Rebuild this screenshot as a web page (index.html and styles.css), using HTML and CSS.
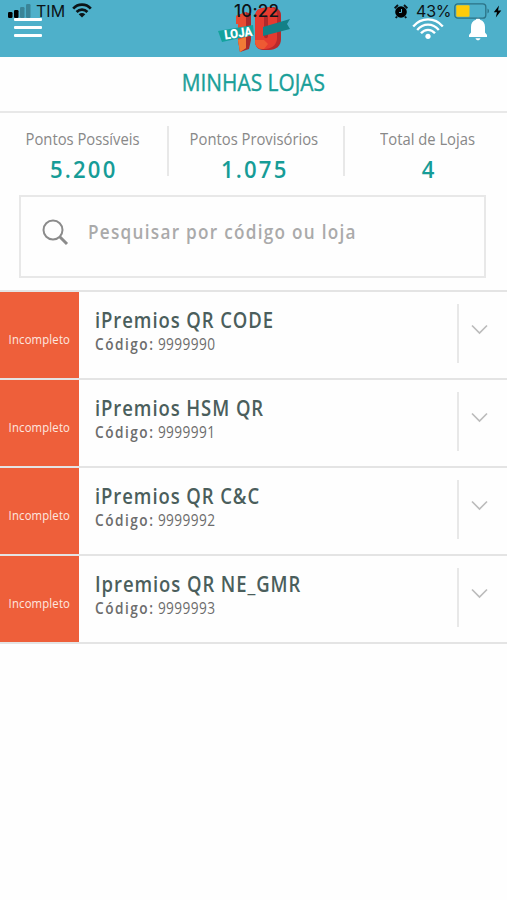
FILE: index.html
```html
<!DOCTYPE html>
<html lang="pt-BR">
  <head>
    <meta charset="UTF-8" />
    <meta name="viewport" content="width=device-width, initial-scale=1.0" />
    <title>Minhas Lojas</title>
    <link rel="stylesheet" href="styles.css">
  </head>
  <body>
    <header class="app-bar">
      <div class="status-bar">
        <div class="status-left">
          <svg class="signal" width="23" height="14" viewBox="0 0 23 14">
            <rect x="0" y="8" width="4.5" height="6" rx="1.2" />
            <rect x="6" y="6" width="4.5" height="8" rx="1.2" />
            <rect x="12" y="3" width="4.5" height="11" rx="1.2" opacity="0.25" />
            <rect x="18" y="0" width="4.5" height="14" rx="1.2" opacity="0.25" />
          </svg>
          <span class="carrier">TIM</span>
          <svg width="20" height="15" viewBox="0 0 20 15" fill="none" stroke="#0c1417" stroke-width="2.7">
            <path d="M1.2 5.6C6 .4 14 .4 18.8 5.6" />
            <path d="M4.6 9C7.6 5.8 12.4 5.8 15.4 9" />
            <path d="M10 14.5L6.7 11.3C8.6 9.5 11.4 9.5 13.3 11.3Z" fill="#0c1417" stroke="none" />
          </svg>
        </div>
        <span class="clock">10:22</span>
        <div class="status-right">
          <svg class="alarm" width="14" height="15" viewBox="0 0 14 15">
            <circle cx="7" cy="8" r="5.8" />
            <path d="M.6 4.2L4 1M13.4 4.2L10 1M3 12.5L1.8 14M11 12.5L12.2 14" stroke="#0c1417" stroke-width="2" />
            <path d="M7.5 5V8.5H5" fill="none" stroke="#4eb0ca" stroke-width="1" />
          </svg>
          <span class="percent">43%</span>
          <svg class="battery" width="36" height="16" viewBox="0 0 36 16">
            <rect x=".8" y=".8" width="31" height="14.4" rx="3" fill="none" stroke="#2b7286" stroke-width="1.3" />
            <rect x="2.3" y="2.3" width="13.2" height="11.4" rx="1" fill="#fecb0a" />
            <path d="M33.5 5.5C35.5 6.5 35.5 9.5 33.5 10.5Z" fill="#2b7286" />
          </svg>
          <svg width="9" height="13" viewBox="0 0 9 13">
            <path d="M6 .5L.8 7.3H4L2.8 12.6L8.3 5.4H5Z" />
          </svg>
        </div>
      </div>
      <button class="menu-btn" aria-label="Menu"><span></span><span></span><span></span></button>
      <svg class="logo" width="74" height="48" viewBox="0 0 74 48">
        <path d="M19 10L29 6L34 8V34L32 43L23 46L21 34V18H19Z" fill="#a92a2c" />
        <path d="M19 10L29 6V42L23 46L21 34V18H19Z" fill="#e84b31" />
        <path d="M21 34L29 31V42L23 46Z" fill="#f17b36" />
        <path d="M45 2L57 1C61 2 64 5 64 9V33C64 40 59 44 52 44H46C41 44 38 40 38 35V12C38 6 40 3 45 2Z" fill="#b82a2c" />
        <path d="M45 2L53 1C58 2 60 5 60 9V32C60 38 56 42 49 43H45C41 43 38 40 38 35V12C38 6 40 3 45 2Z" fill="#e53b30" />
        <path d="M47 12C47 8 51 8 51 12V30C51 33 47 33 47 30Z" fill="#b02a2c" />
        <path d="M38 34L47 34L51 38L47 43H45C41 43 38 40 38 35Z" fill="#ee5a33" />
        <path d="M46 21L73 13L70 18L73 23L46 30Z" fill="#138087" />
        <path d="M1 25L36 19L37 29L5 36Z" fill="#14a29e" />
        <text class="logo-text" x="8" y="33.5" transform="rotate(-8 8 33.5)" textLength="28" lengthAdjust="spacingAndGlyphs">LOJA</text>
      </svg>
      <div class="bar-icons">
        <svg width="32" height="22" viewBox="0 0 32 22" fill="none" stroke="#fff" stroke-width="2.3">
          <path d="M1.2 8.5C9.3-.9 22.7-.9 30.8 8.5" />
          <path d="M5.2 12C11.2 4.9 20.8 4.9 26.8 12" />
          <path d="M9 15.3C13 10.6 19 10.6 23 15.3" />
          <circle cx="16" cy="18.3" r="2.6" fill="#fff" stroke="none" />
        </svg>
        <svg class="bell" width="20" height="24" viewBox="0 0 20 24" fill="#fff">
          <path d="M10 .8C11.3 .8 12 1.5 12 2.8C15.5 3.8 17 6.5 17 10V15.5L19 18V20H1V18L3 15.5V10C3 6.5 4.5 3.8 8 2.8C8 1.5 8.7 .8 10 .8Z" />
          <path d="M7.5 21.2H12.5C12 22.8 11 23.2 10 23.2S8 22.8 7.5 21.2Z" />
        </svg>
      </div>
    </header>

    <h1 class="page-title"><span>MINHAS LOJAS</span></h1>

    <section class="stats">
      <div class="stat">
        <span class="stat-label">Pontos Possíveis</span>
        <span class="stat-value">5.200</span>
      </div>
      <div class="stat">
        <span class="stat-label">Pontos Provisórios</span>
        <span class="stat-value">1.075</span>
      </div>
      <div class="stat">
        <span class="stat-label">Total de Lojas</span>
        <span class="stat-value">4</span>
      </div>
    </section>

    <div class="search">
      <svg width="27" height="27" viewBox="0 0 27 27" fill="none" stroke="#8b8b8b">
        <circle cx="11" cy="11" r="9.5" stroke-width="2" />
        <path d="M17.5 17.5L25 25" stroke-width="3" />
      </svg>
      <span class="search-text">Pesquisar por código ou loja</span>
    </div>

    <ul class="stores">
      <li class="store">
        <div class="store-status"><span>Incompleto</span></div>
        <div class="store-info">
          <h2 class="store-name">iPremios QR CODE</h2>
          <p class="store-code"><b>Código:</b><span>9999990</span></p>
        </div>
        <div class="store-toggle">
          <svg width="17" height="11" viewBox="0 0 17 11"><path d="M1 1.5L8.5 9L16 1.5" /></svg>
        </div>
      </li>
      <li class="store">
        <div class="store-status"><span>Incompleto</span></div>
        <div class="store-info">
          <h2 class="store-name">iPremios HSM QR</h2>
          <p class="store-code"><b>Código:</b><span>9999991</span></p>
        </div>
        <div class="store-toggle">
          <svg width="17" height="11" viewBox="0 0 17 11"><path d="M1 1.5L8.5 9L16 1.5" /></svg>
        </div>
      </li>
      <li class="store">
        <div class="store-status"><span>Incompleto</span></div>
        <div class="store-info">
          <h2 class="store-name">iPremios QR C&amp;C</h2>
          <p class="store-code"><b>Código:</b><span>9999992</span></p>
        </div>
        <div class="store-toggle">
          <svg width="17" height="11" viewBox="0 0 17 11"><path d="M1 1.5L8.5 9L16 1.5" /></svg>
        </div>
      </li>
      <li class="store">
        <div class="store-status"><span>Incompleto</span></div>
        <div class="store-info">
          <h2 class="store-name">Ipremios QR NE_GMR</h2>
          <p class="store-code"><b>Código:</b><span>9999993</span></p>
        </div>
        <div class="store-toggle">
          <svg width="17" height="11" viewBox="0 0 17 11"><path d="M1 1.5L8.5 9L16 1.5" /></svg>
        </div>
      </li>
    </ul>
  </body>
</html>
```

FILE: styles.css
```css
* {
  box-sizing: border-box;
}
body {
  margin: 0;
  min-height: 900px;
  background: #fefefe;
  font-family: "Open Sans", "Noto Sans", sans-serif;
  color: #666;
}
svg {
  display: block;
}
.app-bar {
  position: relative;
  display: flex;
  justify-content: space-between;
  height: 57px;
  padding: 0 19px 0 14px;
  background: #4eb0ca;
}
/* phone status bar sits on top of the app bar */
.status-bar {
  position: absolute;
  z-index: 1;
  top: 0;
  left: 0;
  width: 100%;
  height: 22px;
  padding: 0 5px 0 8px;
  display: flex;
  align-items: center;
  justify-content: space-between;
  font-family: Inter, "Liberation Sans", sans-serif;
  font-size: 16px;
  line-height: 22px;
  color: #0c1417;
}
.status-left,
.status-right {
  display: flex;
  align-items: center;
}
.status-left {
  margin-top: -1px;
}
.signal {
  margin: 0 5px 0 0;
}
.carrier {
  width: 28px;
  margin-right: 8px;
}
.clock {
  position: absolute;
  top: 0;
  left: 234px;
  font-size: 17px;
  font-weight: 500;
  letter-spacing: 0.2px;
}
.percent {
  margin: 0 4px 0 8px;
  width: 34px;
  letter-spacing: -0.2px;
}
.battery {
  margin-right: 3px;
}
.menu-btn {
  display: flex;
  flex-direction: column;
  gap: 5px;
  width: 28px;
  margin-top: 18px;
  padding: 0;
  border: none;
  background: none;
}
.menu-btn span {
  height: 3px;
  width: 28px;
  border-radius: 1px;
  background: #fff;
}
.logo {
  margin: 6px 0 0 53px;
  width: 74px;
}
.logo-text {
  font-family: Roboto, sans-serif;
  font-size: 13px;
  font-weight: 900;
  fill: #fff;
}
.bar-icons {
  display: flex;
  gap: 24px;
  padding-top: 18px;
}
.bell {
  margin-top: -1px;
}
/* narrow the lettering */
.page-title span,
.stat-label,
.store-status span {
  display: inline-block;
  transform: scaleX(0.87);
}
.search-text,
.store-name,
.store-code {
  transform: scaleX(0.88);
  transform-origin: left;
}
.page-title {
  margin: 0;
  height: 56px;
  border-bottom: 2px solid #e8e8e8;
  text-align: center;
  font-size: 24px;
  font-weight: 500;
  line-height: 50px;
  color: #1a9f99;
}
.page-title span {
  -webkit-text-stroke: 0.4px;
}
.stats {
  display: grid;
  grid-template-columns: 168.5px 176px 1fr;
  height: 64px;
  margin-top: 13px;
}
.stat {
  display: flex;
  flex-direction: column;
  align-items: center;
  height: 50px;
  border-right: 2px solid #e8e8e8;
}
.stat:first-child {
  padding-right: 2px;
}
.stat:nth-child(2) {
  padding-right: 4px;
}
.stat:last-child {
  border-right: none;
  padding-left: 4px;
}
.stat-label {
  font-size: 17px;
  line-height: 25px;
  color: #888;
}
.stat-value {
  font-size: 24px;
  font-weight: 600;
  letter-spacing: 2.4px;
  margin-right: -2px;
  line-height: 35px;
  color: #169c97;
  transform: scaleX(0.92);
}
.search {
  display: flex;
  gap: 19px;
  height: 83px;
  margin: 5px 21px 12px 19px;
  padding: 22px 20px 0 21px;
  border: 2px solid #e8e8e8;
}
.search-text {
  font-size: 19.5px;
  font-weight: 600;
  letter-spacing: 1.45px;
  line-height: 26px;
  white-space: nowrap;
  color: #aaa;
}
.stores {
  margin: 0;
  padding: 0;
  list-style: none;
  border-top: 2px solid #e4e4e4;
}
.store {
  display: flex;
  height: 88px;
  border-bottom: 2px solid #e4e4e4;
}
.store-status {
  width: 79px;
  padding-top: 8px;
  background: #ee5f3a;
  text-align: center;
  font-size: 13px;
  letter-spacing: 0.2px;
  line-height: 78px;
  color: #fde8e0;
}
.store-info {
  flex: 1;
  padding: 13px 0 0 16px;
}
.store-name {
  margin: 0;
  font-size: 21px;
  font-weight: 600;
  letter-spacing: 1.05px;
  line-height: 30px;
  white-space: nowrap;
  color: #4b5e5c;
}
.store-code {
  display: flex;
  gap: 4px;
  margin: 0;
  font-size: 15.5px;
  line-height: 19px;
  color: #6c6c6c;
}
.store-code b {
  font-weight: 600;
  letter-spacing: 1.7px;
}
.store-code span {
  letter-spacing: 0.5px;
}
.store-toggle {
  width: 50px;
  height: 59px;
  margin-top: 12px;
  padding: 20px 0 0 12px;
  border-left: 2px solid #e8e8e8;
}
.store-toggle path {
  fill: none;
  stroke: #bcbcbc;
  stroke-width: 1.7;
}
```
